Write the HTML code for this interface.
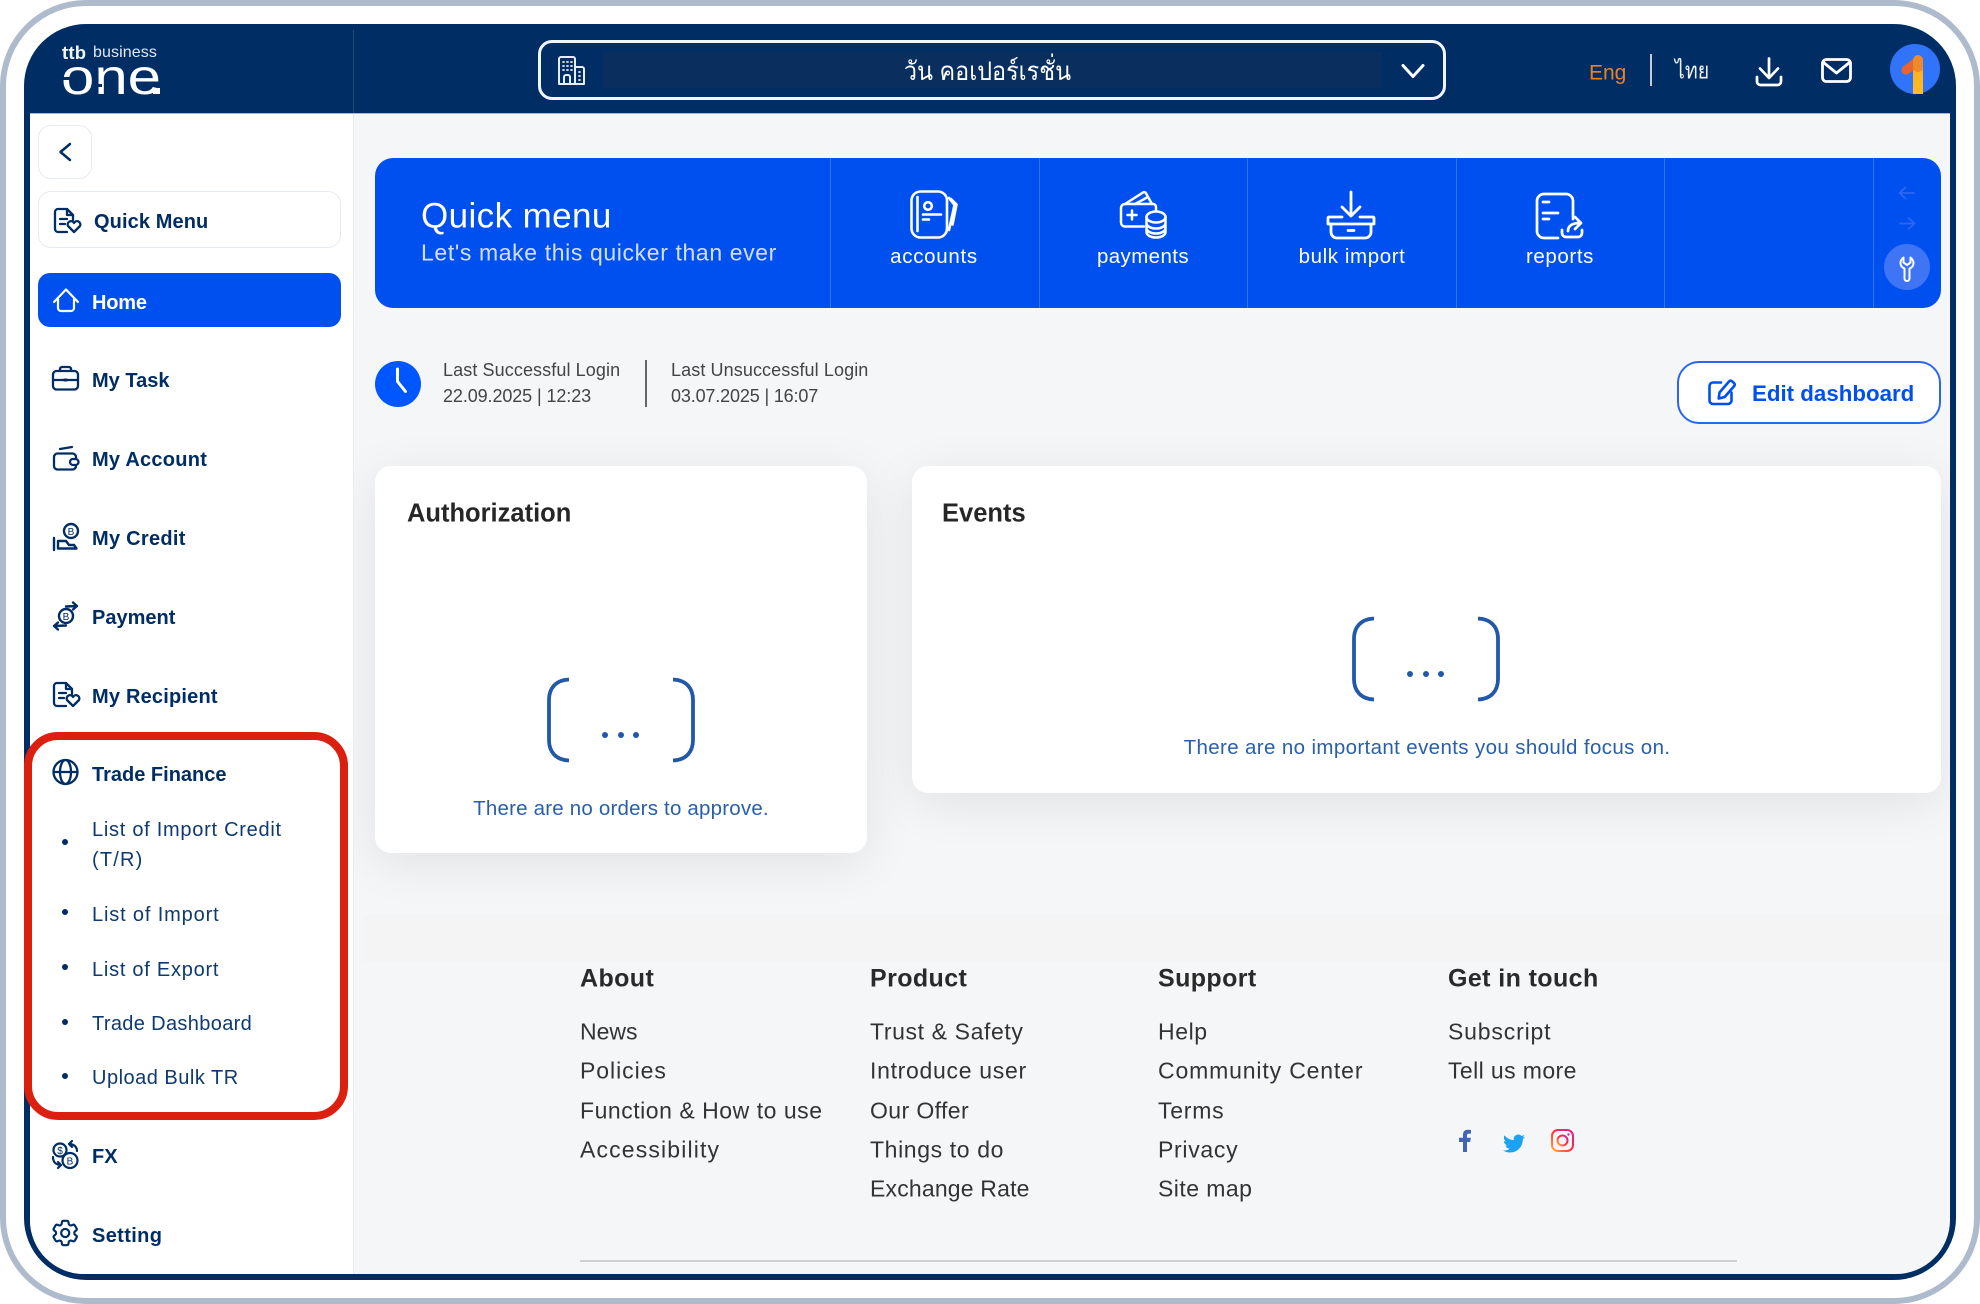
<!DOCTYPE html>
<html lang="en"><head><meta charset="utf-8"><title>ttb business one</title>
<style>
html,body{margin:0;padding:0;background:#fff}
body{position:relative;width:1980px;height:1304px;overflow:hidden;font-family:"Liberation Sans","Noto Sans CJK SC",sans-serif}
.abs{position:absolute;box-sizing:border-box}
.t{position:absolute;white-space:nowrap;line-height:1;transform:translateY(-50%)}
.n{font-weight:700;font-size:20px;color:#002d63;left:92px}
.s{font-size:20px;color:#0d3a70;left:92px}
.f{font-size:23px;color:#333}
.h{font-size:25px;font-weight:700;letter-spacing:.4px;color:#2a2a2a}
.q{font-size:20.5px;letter-spacing:.4px;color:#fff;width:200px;text-align:center}
.l{font-size:18px;letter-spacing:.1px;color:#444}
.card{position:absolute;background:#fff;border-radius:16px;box-shadow:0 10px 50px rgba(0,0,0,.085)}
.e{font-size:20.5px;color:#2a5fa8;width:500px;text-align:center}
</style></head><body>
<div class="abs" style="left:0;top:0;width:1980px;height:1304px;border:6px solid #aebbcc;border-radius:86px"></div>
<div class="abs" style="left:24px;top:24px;width:1932px;height:1256px;background:#002d63;border-radius:62px"></div>
<div class="abs" style="left:353px;top:30px;width:1px;height:83px;background:rgba(255,255,255,.13)"></div>
<div class="abs" style="left:30px;top:113px;width:1920px;height:1161px;background:#f5f6f8;border-radius:0 0 54px 54px;overflow:hidden;border-top:1px solid #a9b6c8">
 <div class="abs" style="left:334px;top:801px;width:1586px;height:47px;background:#f4f4f5"></div>
 <div class="abs" style="left:0;top:0;width:1920px;height:801px;overflow:hidden">
  <div class="card" style="left:345px;top:352px;width:492px;height:387px"></div>
  <div class="card" style="left:882px;top:352px;width:1029px;height:327px"></div>
 </div>
 <div class="abs" style="left:0;top:0;width:324px;height:1161px;background:#fff;border-right:1px solid #e8eaee"></div>
</div>

<!-- header -->
<div class="abs" style="left:538px;top:40px;width:908px;height:60px;border:3px solid #f2f5f9;border-radius:14px"></div>
<div class="abs" style="left:603px;top:52px;width:779px;height:36px;background:#0a2f5e"></div>
<div class="t" style="left:598px;width:779px;top:71px;text-align:center;font-size:26px;color:#fff;transform:translateY(-50%) scaleX(.9);font-family:'Liberation Sans','DejaVu Sans','Noto Sans CJK SC',sans-serif">วัน คอเปอร์เรชั่น</div>
<div class="t" style="left:1589px;top:73px;font-size:21px;color:#e8822a">Eng</div>
<div class="abs" style="left:1650px;top:54px;width:1.5px;height:32px;background:#c4ccd8"></div>
<div class="t" style="left:1675px;top:71px;font-size:23px;color:#eef1f6;transform-origin:left center;transform:translateY(-50%) scaleX(.85);font-family:'Liberation Sans','DejaVu Sans','Noto Sans CJK SC',sans-serif">ไทย</div>
<div class="t" style="left:93px;top:53px;font-size:16px;letter-spacing:.1px;color:#e4e9f0">business</div>
<div class="t" style="left:62px;top:53px;font-size:18.500px;font-weight:700;color:#f2f4f8;letter-spacing:.2px">ttb</div>

<!-- sidebar -->
<div class="abs" style="left:38px;top:125px;width:54px;height:54px;background:#fff;border:1.5px solid #e6ebf2;border-radius:13px"></div>
<div class="abs" style="left:38px;top:191px;width:303px;height:57px;background:#fff;border:1.5px solid #e6ebf2;border-radius:13px"></div>
<div class="abs" style="left:38px;top:273px;width:303px;height:54px;background:#0050f0;border-radius:12px"></div>
<div class="t n" style="left:94px;top:222px;letter-spacing:.1px">Quick Menu</div>
<div class="t n" style="top:303px;color:#fff;letter-spacing:-.2px">Home</div>
<div class="t n" style="top:381px">My Task</div>
<div class="t n" style="top:460px;letter-spacing:.25px">My Account</div>
<div class="t n" style="top:539px;letter-spacing:.28px">My Credit</div>
<div class="t n" style="top:618px">Payment</div>
<div class="t n" style="top:697px;letter-spacing:.2px">My Recipient</div>
<div class="t n" style="top:775px">Trade Finance</div>
<div class="t s" style="top:830px;letter-spacing:.73px">List of Import Credit</div>
<div class="t s" style="top:860px;letter-spacing:1.2px">(T/R)</div>
<div class="t s" style="top:915px;letter-spacing:.85px">List of Import</div>
<div class="t s" style="top:970px;letter-spacing:.75px">List of Export</div>
<div class="t s" style="top:1024px;letter-spacing:.35px">Trade Dashboard</div>
<div class="t s" style="top:1078px;letter-spacing:.5px">Upload Bulk TR</div>
<div class="t n" style="top:1157px">FX</div>
<div class="t n" style="top:1236px;letter-spacing:.36px">Setting</div>
<div class="abs" style="left:24px;top:732px;width:324px;height:388px;border:8px solid #dc2010;border-radius:34px"></div>

<!-- quick menu -->
<div class="abs" style="left:375px;top:158px;width:1566px;height:150px;background:#0050f0;border-radius:18px"></div>
<div class="abs" style="left:830px;top:158px;width:1px;height:150px;background:rgba(255,255,255,.2)"></div>
<div class="abs" style="left:1039px;top:158px;width:1px;height:150px;background:rgba(255,255,255,.2)"></div>
<div class="abs" style="left:1247px;top:158px;width:1px;height:150px;background:rgba(255,255,255,.2)"></div>
<div class="abs" style="left:1456px;top:158px;width:1px;height:150px;background:rgba(255,255,255,.2)"></div>
<div class="abs" style="left:1664px;top:158px;width:1px;height:150px;background:rgba(255,255,255,.2)"></div>
<div class="abs" style="left:1873px;top:158px;width:1px;height:150px;background:rgba(255,255,255,.2)"></div>
<div class="t" style="left:421px;top:216px;font-size:35px;letter-spacing:.4px;color:#fff">Quick menu</div>
<div class="t" style="left:421px;top:253px;font-size:23px;letter-spacing:.62px;color:rgba(255,255,255,.82)">Let's make this quicker than ever</div>
<div class="t q" style="left:834px;top:257px;letter-spacing:.7px">accounts</div>
<div class="t q" style="left:1043px;top:257px">payments</div>
<div class="t q" style="left:1252px;top:257px;letter-spacing:.6px">bulk import</div>
<div class="t q" style="left:1460px;top:257px;letter-spacing:.6px">reports</div>
<div class="abs" style="left:1884px;top:244px;width:46px;height:46px;border-radius:50%;background:#3f74f4"></div>

<!-- login row -->
<div class="abs" style="left:375px;top:361px;width:46px;height:46px;border-radius:50%;background:#0057ff"></div>
<div class="t l" style="left:443px;top:370px">Last Successful Login</div>
<div class="t l" style="left:443px;top:396px;letter-spacing:-.1px">22.09.2025 | 12:23</div>
<div class="abs" style="left:645px;top:360px;width:2px;height:47px;background:#666"></div>
<div class="t l" style="left:671px;top:370px">Last Unsuccessful Login</div>
<div class="t l" style="left:671px;top:396px;letter-spacing:-.15px">03.07.2025 | 16:07</div>
<div class="abs" style="left:1677px;top:361px;width:264px;height:63px;background:#fff;border:2px solid #2a66ee;border-radius:22px"></div>
<div class="t" style="left:1752px;top:394px;font-size:22.3px;font-weight:700;color:#0050f0">Edit dashboard</div>

<!-- cards text -->
<div class="t" style="left:407px;top:514px;font-size:25.5px;font-weight:700;color:#262626">Authorization</div>
<div class="t" style="left:942px;top:514px;font-size:25.5px;font-weight:700;color:#262626">Events</div>
<div class="t e" style="left:371px;top:809px;letter-spacing:.2px">There are no orders to approve.</div>
<div class="t e" style="left:1177px;top:748px;letter-spacing:.37px">There are no important events you should focus on.</div>

<!-- footer -->
<div class="t h" style="left:580px;top:979px">About</div>
<div class="t f" style="left:580px;top:1032px;letter-spacing:0">News</div>
<div class="t f" style="left:580px;top:1071px;letter-spacing:.95px">Policies</div>
<div class="t f" style="left:580px;top:1111px;letter-spacing:.53px">Function &amp; How to use</div>
<div class="t f" style="left:580px;top:1150px;letter-spacing:1.15px">Accessibility</div>
<div class="t h" style="left:870px;top:979px">Product</div>
<div class="t f" style="left:870px;top:1032px;letter-spacing:.62px">Trust &amp; Safety</div>
<div class="t f" style="left:870px;top:1071px;letter-spacing:.7px">Introduce user</div>
<div class="t f" style="left:870px;top:1111px;letter-spacing:.4px">Our Offer</div>
<div class="t f" style="left:870px;top:1150px;letter-spacing:.62px">Things to do</div>
<div class="t f" style="left:870px;top:1189px;letter-spacing:.18px">Exchange Rate</div>
<div class="t h" style="left:1158px;top:979px">Support</div>
<div class="t f" style="left:1158px;top:1032px;letter-spacing:.6px">Help</div>
<div class="t f" style="left:1158px;top:1071px;letter-spacing:.85px">Community Center</div>
<div class="t f" style="left:1158px;top:1111px;letter-spacing:.75px">Terms</div>
<div class="t f" style="left:1158px;top:1150px;letter-spacing:.7px">Privacy</div>
<div class="t f" style="left:1158px;top:1189px;letter-spacing:.45px">Site map</div>
<div class="t h" style="left:1448px;top:979px">Get in touch</div>
<div class="t f" style="left:1448px;top:1032px;letter-spacing:.83px">Subscript</div>
<div class="t f" style="left:1448px;top:1071px;letter-spacing:.4px">Tell us more</div>
<div class="abs" style="left:580px;top:1260px;width:1157px;height:2px;background:#cfd0d2"></div>

<!-- icons overlay -->
<svg class="abs" style="left:0;top:0" width="1980" height="1304" viewBox="0 0 1980 1304" fill="none" stroke-linecap="round" stroke-linejoin="round">
<defs>
<linearGradient id="ig" x1="0" y1="1" x2="1" y2="0"><stop offset="0" stop-color="#ffb02e"/><stop offset=".5" stop-color="#ff2d3c"/><stop offset="1" stop-color="#d6249f"/></linearGradient>
<linearGradient id="one" x1="0" y1="0" x2="0" y2="1"><stop offset="0" stop-color="#f06a2a"/><stop offset=".4" stop-color="#ffb020"/><stop offset="1" stop-color="#ffbf20"/></linearGradient>
</defs>
<!-- logo -->
<text x="61" y="94" font-family="Liberation Sans" font-size="50" fill="#fff" textLength="100" lengthAdjust="spacingAndGlyphs">one</text>
<rect x="60" y="77" width="11" height="3" fill="#002d63"/><rect x="93" y="84" width="9" height="3" fill="#002d63"/><rect x="153" y="88" width="7" height="6" fill="#fff"/>
<!-- back chevron -->
<path d="M70 144 L60.500 152 L70 160" stroke="#002d63" stroke-width="2.500"/>
<!-- quick menu doc-heart -->
<g stroke="#002d63" stroke-width="2.300"><path d="M67 232H58a3 3 0 0 1-3-3V212a3 3 0 0 1 3-3h9l6 6v5"/><path d="M67 209v6h6M60 219h7M60 224h5"/><path d="M74 232l-6-6a3.300 3.300 0 0 1 6-3 3.300 3.300 0 0 1 6 3z"/></g>
<g stroke="#002d63" stroke-width="2.300" transform="translate(-1,474)"><path d="M67 232H58a3 3 0 0 1-3-3V212a3 3 0 0 1 3-3h9l6 6v5"/><path d="M67 209v6h6M60 219h7M60 224h5"/><path d="M74 232l-6-6a3.300 3.300 0 0 1 6-3 3.300 3.300 0 0 1 6 3z"/></g>
<!-- home -->
<path d="M54 302 L66 289.500 L78 302 M58 299 V308a3 3 0 0 0 3 3h10a3 3 0 0 0 3-3V299" stroke="#fff" stroke-width="2.200"/>
<!-- task -->
<g stroke="#002d63" stroke-width="2.300"><rect x="53" y="371" width="25" height="18.500" rx="3.500"/><path d="M60 371v-2a2 2 0 0 1 2-2h7a2 2 0 0 1 2 2v2M53 380h25"/><path d="M64.500 380h2" stroke-width="3"/></g>
<!-- account -->
<g stroke="#002d63" stroke-width="2.300"><path d="M76 459v-2a3.500 3.500 0 0 0-3.500-3.500H57.500A3.500 3.500 0 0 0 54 457v9a3.500 3.500 0 0 0 3.500 3.500h15A3.500 3.500 0 0 0 76 466v-1"/><path d="M60 449l12-2"/><rect x="70" y="459" width="8.500" height="6" rx="3"/></g>
<!-- credit -->
<g stroke="#002d63" stroke-width="2.400"><circle cx="71" cy="531" r="7"/><path d="M54 538v12M58 541h8l3 4h5l2.500 3.500H58z"/></g>
<text x="71" y="535" font-family="Liberation Sans" font-size="10" fill="#002d63" text-anchor="middle">B</text>
<!-- payment -->
<g stroke="#002d63" stroke-width="2.400"><circle cx="66" cy="616" r="7"/><path d="M66 606.500l11-.5M73 602.500l4 3.500-4 3.500M66 625.500l-12 .5M58 622.500l-4 3.500 4 3.500"/></g>
<text x="66" y="620" font-family="Liberation Sans" font-size="10" fill="#002d63" text-anchor="middle">B</text>
<!-- globe -->
<g stroke="#002d63" stroke-width="2.300"><circle cx="65.500" cy="772" r="12"/><ellipse cx="65.500" cy="772" rx="5.500" ry="12"/><path d="M53.500 772h24"/></g>
<!-- bullets -->
<g fill="#002d63"><circle cx="65" cy="842" r="3"/><circle cx="65" cy="912" r="3"/><circle cx="65" cy="967" r="3"/><circle cx="65" cy="1022" r="3"/><circle cx="65" cy="1076" r="3"/></g>
<!-- fx -->
<g stroke="#002d63" stroke-width="2.200"><circle cx="60" cy="1150" r="6.500"/><circle cx="70" cy="1160.500" r="7.500"/><path d="M53 1157c0 5 3 8 8 8M58 1162l3 3-3 3M77 1151c0-4-3-7-8-7M72 1147l-3-3 3-3"/></g>
<text x="60" y="1154" font-family="Liberation Sans" font-size="10" fill="#002d63" text-anchor="middle">$</text>
<text x="70" y="1164.500" font-family="Liberation Sans" font-size="10" fill="#002d63" text-anchor="middle">B</text>
<!-- gear -->
<g transform="translate(49,1216.800) scale(1.350)" stroke="#002d63" stroke-width="1.600"><path d="M9.594 3.94c.09-.542.56-.94 1.11-.94h2.593c.55 0 1.02.398 1.11.94l.213 1.281c.063.374.313.686.645.87.074.04.147.083.22.127.325.196.72.257 1.075.124l1.217-.456a1.125 1.125 0 0 1 1.37.49l1.296 2.247a1.125 1.125 0 0 1-.26 1.431l-1.003.827c-.293.241-.438.613-.43.992a7.723 7.723 0 0 1 0 .255c-.008.378.137.75.43.991l1.004.827c.424.35.534.955.26 1.43l-1.298 2.247a1.125 1.125 0 0 1-1.369.491l-1.217-.456c-.355-.133-.75-.072-1.076.124a6.47 6.47 0 0 1-.22.128c-.331.183-.581.495-.644.869l-.213 1.281c-.09.543-.56.94-1.11.94h-2.594c-.55 0-1.019-.398-1.11-.94l-.213-1.281c-.062-.374-.312-.686-.644-.87a6.52 6.52 0 0 1-.22-.127c-.325-.196-.72-.257-1.076-.124l-1.217.456a1.125 1.125 0 0 1-1.369-.49l-1.297-2.247a1.125 1.125 0 0 1 .26-1.431l1.004-.827c.292-.24.437-.613.43-.991a6.932 6.932 0 0 1 0-.255c.007-.38-.138-.751-.43-.992l-1.004-.827a1.125 1.125 0 0 1-.26-1.43l1.297-2.247a1.125 1.125 0 0 1 1.37-.491l1.216.456c.356.133.751.072 1.076-.124.072-.044.146-.086.22-.128.332-.183.582-.495.644-.869l.214-1.28Z"/><circle cx="12" cy="12" r="3"/></g>
<!-- building -->
<g stroke="#e8edf4" stroke-width="2"><path d="M559 84V59a2 2 0 0 1 2-2h12a2 2 0 0 1 2 2v25zM575 67h7a2 2 0 0 1 2 2v15h-9M564 84v-7a2 2 0 0 1 2-2h2a2 2 0 0 1 2 2v7"/><path d="M563 62h1M567 62h1M571 62h1M563 66h1M567 66h1M571 66h1M563 70h1M567 70h1M571 70h1M579 72h1M579 76h1M579 80h1" stroke-width="1.800"/></g>
<!-- chevron -->
<path d="M1403 65.500l10 11 10-11" stroke="#fff" stroke-width="3"/>
<!-- download -->
<path d="M1769 58.500v19M1760 68.500l9 9.500 9-9.500M1757 77v4.500a3.500 3.500 0 0 0 3.500 3.500h17a3.500 3.500 0 0 0 3.500-3.500V77" stroke="#fff" stroke-width="2.700"/>
<!-- mail -->
<rect x="1822.500" y="59.500" width="28" height="22" rx="4" stroke="#fff" stroke-width="2.800"/><path d="M1823.500 62.500l13 10.500 13-10.500" stroke="#fff" stroke-width="2.800"/>
<!-- avatar -->
<circle cx="1915" cy="69" r="25" fill="#2f74fb"/>
<path d="M1913 94V66l10-8v36z" fill="url(#one)" stroke="none"/><path d="M1906 70l12-9" stroke="#e9652f" stroke-width="9"/><path d="M1918 60v7" stroke="#ee8a2a" stroke-width="10" stroke-linecap="round"/>
<!-- accounts -->
<g stroke="#fff" stroke-width="2.600"><rect x="911.500" y="191.500" width="35.500" height="46" rx="9"/><path d="M917.500 197v34"/><circle cx="928" cy="206" r="3.800"/><path d="M923 214.500h18M923 219.500h6"/><path d="M949 198l5.500 7-5.500 25M951 199l5.500 5.500-4 20"/></g>
<!-- payments -->
<g stroke="#fff" stroke-width="2.500"><path d="M1144 226.500h-19a4 4 0 0 1-4-4V208a4 4 0 0 1 4-4h28a3 3 0 0 1 3 3v3"/><path d="M1125 204l18-11.500a2 2 0 0 1 3 .8l6 10.700M1135 204l12-6.500"/><path d="M1132 210.500v9M1127.500 215h9"/><ellipse cx="1156" cy="217" rx="9.500" ry="5.500"/><path d="M1146.500 217v15c0 3 4 5.500 9.500 5.500s9.500-2.500 9.500-5.500v-15M1146.500 223c0 3 4 5.500 9.500 5.500s9.500-2.500 9.500-5.500M1146.500 228c0 3 4 5.500 9.500 5.500s9.500-2.500 9.500-5.500"/></g>
<!-- bulk -->
<g stroke="#fff" stroke-width="2.800"><path d="M1351 192v24M1342 207l9 9 9-9M1329 217h13M1360 217h13a1 1 0 0 1 1 1v6h-46v-6a1 1 0 0 1 1-1"/><path d="M1331 224v8a6 6 0 0 0 6 6h28a6 6 0 0 0 6-6v-8M1348 230.500h6"/></g>
<!-- reports -->
<g stroke="#fff" stroke-width="2.700"><path d="M1558 238h-14a7 7 0 0 1-7-7v-30a7 7 0 0 1 7-7h22a7 7 0 0 1 7 7v18"/><path d="M1543 202h6M1543 213h15M1543 219h6"/><path d="M1562 230v3a4 4 0 0 0 4 4h12a4 4 0 0 0 4-4v-3M1568 231c0-5 4-8 12-8M1575 217l6 6-6 6"/></g>
<!-- arrows -->
<path d="M1914 193h-14M1905.500 187.500l-6 5.500 6 5.500M1900 223.500h14M1908.500 218l6 5.500-6 5.500" stroke="#2a68f3" stroke-width="1.800"/>
<!-- wrench -->
<path d="M1903.500 257.500c-2 1.500-3 3.500-3 5.500 0 2.500 1.500 4.500 4 5.500v10a2.500 2.500 0 0 0 5 0v-10c2.500-1 4-3 4-5.500 0-2-1-4-3-5.500v5l-3.500 2.500-3.500-2.500z" stroke="#fff" stroke-width="2"/>
<!-- clock -->
<path d="M397.500 369v12.500l8 10" stroke="#fff" stroke-width="3"/>
<!-- edit -->
<path d="M1721 382.500h-8a3.500 3.500 0 0 0-3.500 3.500v14.500a3.500 3.500 0 0 0 3.500 3.500h15a3.500 3.500 0 0 0 3.500-3.500v-8" stroke="#0050f0" stroke-width="2.600"/>
<path d="M1719.500 392.500l9.500-11a2 2 0 0 1 3-.2l2 1.700a2 2 0 0 1 .2 3l-9.500 11-6 1.500z" stroke="#0050f0" stroke-width="2.600"/>
<!-- empty-state brackets -->
<g stroke="#2258a8" stroke-width="3.800">
<path d="M569 679.500C556 680 549 688 549 700V740C549 752 556 760 569 760.500M673 679.500C686 680 693 688 693 700V740C693 752 686 760 673 760.500" stroke-linecap="butt"/>
<path d="M1374 618.500C1361 619 1354 627 1354 639V679C1354 691 1361 699 1374 699.500M1478 618.500C1491 619 1498 627 1498 639V679C1498 691 1491 699 1478 699.500" stroke-linecap="butt"/>
</g>
<g fill="#2258a8"><circle cx="605" cy="735" r="3"/><circle cx="621" cy="735" r="3"/><circle cx="636" cy="735" r="3"/><circle cx="1410" cy="674" r="3"/><circle cx="1426" cy="674" r="3"/><circle cx="1441" cy="674" r="3"/></g>
<!-- social -->
<path d="M1463 1152v-10h-4v-4.200h4v-3c0-3.400 2-5 5-5 1.300 0 2.500.1 3 .2v3.600h-2c-1.500 0-2 .8-2 2v2.200h3.800l-.6 4.200H1467v10z" fill="#4267b2"/>
<g transform="translate(1503,1132.500) scale(.92)"><path fill="#1da1f2" d="M23.953 4.570a10 10 0 01-2.825.775 4.958 4.958 0 002.163-2.723c-.951.555-2.005.959-3.127 1.184a4.920 4.920 0 00-8.384 4.482C7.690 8.095 4.067 6.130 1.640 3.162a4.822 4.822 0 00-.666 2.475c0 1.710.870 3.213 2.188 4.096a4.904 4.904 0 01-2.228-.616v.060a4.923 4.923 0 003.946 4.827 4.996 4.996 0 01-2.212.085 4.936 4.936 0 004.604 3.417 9.867 9.867 0 01-6.102 2.105c-.390 0-.779-.023-1.170-.067a13.995 13.995 0 007.557 2.209c9.053 0 13.998-7.496 13.998-13.985 0-.210 0-.420-.015-.630A9.935 9.935 0 0024 4.590z"/></g>
<rect x="1552" y="1130" width="21" height="21" rx="6" stroke="url(#ig)" stroke-width="2"/><circle cx="1562.500" cy="1140.500" r="5" stroke="url(#ig)" stroke-width="2"/><circle cx="1568.500" cy="1134.500" r="1.200" fill="#d6249f"/>
</svg>
</body></html>
